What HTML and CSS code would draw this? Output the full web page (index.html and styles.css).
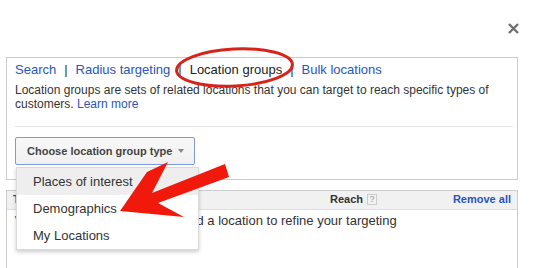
FILE: index.html
```html
<!DOCTYPE html>
<html lang="en">
<head>
  <meta charset="UTF-8">
  <title>Locations</title>
  <link rel="stylesheet" href="styles.css">
</head>
<body>
  <div class="topbar">
    <button class="close" title="Close">
      <svg width="11" height="11" viewBox="0 0 11 11"><path d="M1 1L10 10M10 1L1 10" stroke="#707070" stroke-width="2.4"/></svg>
    </button>
  </div>

  <div class="panel picker">
    <div class="tabs">
      <a href="#">Search</a><span class="sep">|</span><a href="#">Radius targeting</a><span class="sep">|</span><span class="current">Location groups</span><span class="sep">|</span><a href="#">Bulk locations</a>
    </div>
    <p class="desc">Location groups are sets of related locations that you can target to reach specific types of customers. <a href="#">Learn more</a></p>
    <div class="rule"></div>
    <div class="chooser">
      <button class="choose">Choose location group type <span class="caret"></span></button>
      <ul class="menu">
        <li class="hover">Places of interest</li>
        <li>Demographics</li>
        <li>My Locations</li>
      </ul>
    </div>
  </div>

  <div class="panel targeted">
    <div class="thead">
      <span class="col-name">Targeted locations</span>
      <span class="col-reach">Reach <span class="help">?</span></span>
      <span class="col-remove"><a href="#">Remove all</a></span>
    </div>
    <div class="empty">We're targeting all locations. Add a location to refine your targeting</div>
  </div>

  <!-- annotation drawn on top of the screenshot -->
  <svg class="markup" width="533" height="268" viewBox="0 0 533 268">
    <ellipse cx="234.5" cy="67.5" rx="58" ry="18.5" transform="rotate(-3 234.5 67.5)" fill="none" stroke="#d8231b" stroke-width="3"/>
    <polygon points="120,211 147,172 168,162 152,193 225,164 229,177 158,203 184,217" fill="#f0190c"/>
  </svg>
</body>
</html>
```

FILE: styles.css
```css
body{
  margin: 0;
  position: relative;
  background: #fff;
  color: #333;
  font-family: "Liberation Sans", Arial, sans-serif;
  overflow: hidden;
  height: 268px;
}
a{
  color: #2855c0;
  text-decoration: none;
}
.topbar{
  height: 57px;
  display: flex;
  justify-content: flex-end;
  align-items: center;
  padding-right: 14px;
}
.close{
  border: none;
  background: none;
  padding: 0;
  width: 11px;
  height: 11px;
  display: flex;
  cursor: pointer;
}
.panel{
  border: 1px solid #ccc;
  margin: 0 15px 0 6px;
}
.picker{
  padding: 4px 4px 14px 8px;
}
.tabs{
  font-size: 13px;
  line-height: 15px;
}
.sep{
  margin: 0 8px;
  color: #333;
}
.current{
  color: #222;
}
.desc{
  margin: 6px 0 0;
  font-size: 12px;
  line-height: 14px;
  color: #333;
}
.rule{
  border-top: 1px solid #e3e3e3;
  margin-top: 15px;
}
.chooser{
  position: relative;
  margin-top: 10px;
  width: 180px;
}
.choose{
  width: 180px;
  height: 28px;
  border: 1px solid #7d9bd6;
  border-radius: 2px;
  background: linear-gradient(#f8f8f8, #f0f0f0);
  font-family: "Liberation Sans", Arial, sans-serif;
  font-size: 11px;
  font-weight: bold;
  color: #444;
  padding: 0 0 0 11px;
  display: flex;
  align-items: center;
  cursor: pointer;
}
.caret{
  margin-left: 6px;
  border-left: 3px solid transparent;
  border-right: 3px solid transparent;
  border-top: 4px solid #888;
}
.menu{
  position: absolute;
  top: 30px;
  left: 1px;
  width: 181px;
  margin: 0;
  padding: 0;
  list-style: none;
  background: #fff;
  border: 1px solid rgba(0,0,0,.15);
  box-shadow: 0 2px 4px rgba(0,0,0,.2);
  z-index: 2;
}
.menu li{
  height: 27px;
  line-height: 27px;
  padding-left: 16px;
  font-size: 13px;
  color: #333;
}
.menu li.hover{
  background: #eee;
}
.targeted{
  margin-top: 10px;
  height: 78px;
  border-bottom: none;
}
.thead{
  display: flex;
  background: #f1f1f1;
  border-bottom: 1px solid #ddd;
  padding: 1px 6px 3px 6px;
  line-height: 14px;
  font-size: 11px;
  font-weight: bold;
  color: #444;
}
.col-name{
  flex: 1;
}
.col-reach{
  display: flex;
  align-items: center;
  color: #333;
}
.help{
  display: inline-block;
  width: 8px;
  height: 9px;
  margin-left: 4px;
  border: 1px solid #ccc;
  font-size: 9px;
  line-height: 9px;
  font-weight: normal;
  color: #999;
  text-align: center;
}
.col-remove{
  width: 134px;
  text-align: right;
}
.empty{
  padding: 3px 8px 0;
  font-size: 13px;
  line-height: 16px;
  color: #333;
}
.markup{
  position: absolute;
  top: 0;
  left: 0;
  pointer-events: none;
  z-index: 3;
}
```
